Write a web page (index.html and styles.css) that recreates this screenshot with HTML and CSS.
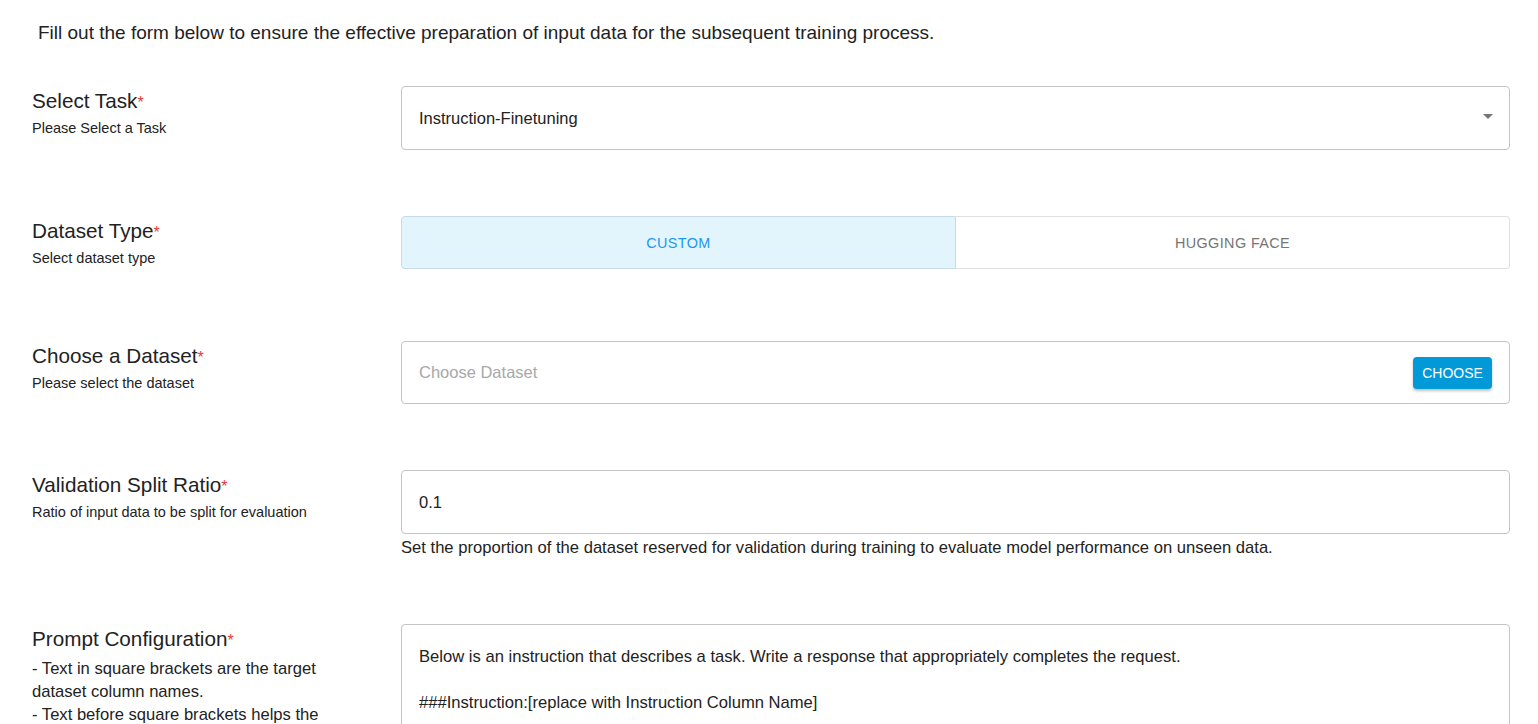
FILE: index.html
```html
<!DOCTYPE html>
<html lang="en">
<head>
    <meta charset="UTF-8">
    <meta name="viewport" content="width=device-width, initial-scale=1.0">
    <title>Data Preparation</title>
    <link rel="stylesheet" href="styles.css">
</head>
<body>
    <div class="page">
        <p class="intro">Fill out the form below to ensure the effective preparation of input data for the subsequent training process.</p>

        <form class="form" action="#">
            <div class="row">
                <div class="label-col">
                    <div class="label-title">Select Task<span class="req">*</span></div>
                    <div class="label-sub">Please Select a Task</div>
                </div>
                <div class="field-col">
                    <div class="field field-select">
                        <span class="field-value">Instruction-Finetuning</span>
                        <span class="caret"></span>
                    </div>
                </div>
            </div>

            <div class="row row-toggle">
                <div class="label-col">
                    <div class="label-title">Dataset Type<span class="req">*</span></div>
                    <div class="label-sub">Select dataset type</div>
                </div>
                <div class="field-col">
                    <div class="toggle">
                        <button type="button" class="toggle-btn active">Custom</button>
                        <button type="button" class="toggle-btn">Hugging Face</button>
                    </div>
                </div>
            </div>

            <div class="row">
                <div class="label-col">
                    <div class="label-title">Choose a Dataset<span class="req">*</span></div>
                    <div class="label-sub">Please select the dataset</div>
                </div>
                <div class="field-col">
                    <div class="field field-choose">
                        <span class="placeholder">Choose Dataset</span>
                        <button type="button" class="choose-btn">Choose</button>
                    </div>
                </div>
            </div>

            <div class="row">
                <div class="label-col">
                    <div class="label-title">Validation Split Ratio<span class="req">*</span></div>
                    <div class="label-sub">Ratio of input data to be split for evaluation</div>
                </div>
                <div class="field-col">
                    <div class="field">
                        <span class="field-value">0.1</span>
                    </div>
                    <div class="helper">Set the proportion of the dataset reserved for validation during training to evaluate model performance on unseen data.</div>
                </div>
            </div>

            <div class="row">
                <div class="label-col">
                    <div class="label-title">Prompt Configuration<span class="req">*</span></div>
                    <div class="label-desc">
                        - Text in square brackets are the target dataset column names.<br>
                        - Text before square brackets helps the model understand the structure of the prompt.
                    </div>
                </div>
                <div class="field-col">
                    <div class="field field-area">
                        <p>Below is an instruction that describes a task. Write a response that appropriately completes the request.</p>
                        <p>###Instruction:[replace with Instruction Column Name]</p>
                        <p>###Response:[replace with Response Column Name]</p>
                    </div>
                </div>
            </div>
        </form>
    </div>
</body>
</html>
```

FILE: styles.css
```css
/* page */
body {
    font-family: "Liberation Sans", Arial, sans-serif;
    background-color: #ffffff;
    color: #222222;
    margin: 0;
    padding: 0;
}

.page {
    padding: 22px 28px 0 32px;
}

.intro {
    margin: 0 0 42px 6px;
    font-size: 19px;
    line-height: 22px;
    color: #222222;
}

/* rows */
.row {
    display: flex;
    align-items: flex-start;
    margin-bottom: 66px;
}

.row-toggle {
    margin-bottom: 72px;
}

.label-col {
    width: 369px;
    flex-shrink: 0;
    padding-top: 3px;
}

.label-title {
    font-size: 20.7px;
    line-height: 24px;
    color: #222222;
}

.req {
    color: #e53935;
    font-size: 16px;
}

.label-sub {
    margin-top: 4px;
    font-size: 14.5px;
    line-height: 18px;
    color: #222222;
}

.label-desc {
    margin-top: 4px;
    width: 300px;
    font-size: 16.6px;
    line-height: 23px;
    color: #222222;
}

.field-col {
    flex: 1;
}

/* inputs */
.field {
    box-sizing: border-box;
    height: 64px;
    display: flex;
    align-items: center;
    padding: 0 17px;
    border: 1px solid #c4c4c4;
    border-radius: 4px;
    font-size: 16.5px;
    color: #222222;
}

.field-select {
    justify-content: space-between;
    padding-right: 16px;
}

.caret {
    width: 0;
    height: 0;
    border-left: 5px solid transparent;
    border-right: 5px solid transparent;
    border-top: 5px solid #757575;
    margin-top: -4px;
}

.field-choose {
    height: 63px;
    justify-content: space-between;
}

.placeholder {
    color: #a8a8a8;
}

.choose-btn {
    height: 32px;
    width: 79px;
    border: 0;
    border-radius: 4px;
    background-color: #0299d9;
    color: #ffffff;
    font-family: inherit;
    font-size: 14px;
    text-transform: uppercase;
    box-shadow: 0 2px 3px rgba(0, 0, 0, 0.25);
    cursor: pointer;
}

.helper {
    margin-top: 4px;
    font-size: 16.6px;
    line-height: 20px;
    color: #222222;
}

.field-area {
    height: auto;
    display: block;
    padding: 20px 17px;
}

.field-area p {
    margin: 0 0 23px 0;
    line-height: 23px;
    font-size: 16.6px;
}

/* toggle */
.toggle {
    display: flex;
    height: 53px;
}

.toggle-btn {
    flex: 1;
    background-color: #ffffff;
    border: 1px solid #e0e0e0;
    font-family: inherit;
    font-size: 14.4px;
    letter-spacing: 0.4px;
    text-transform: uppercase;
    color: #757575;
    cursor: pointer;
}

.toggle-btn:first-child {
    border-radius: 4px 0 0 4px;
}

.toggle-btn:last-child {
    border-left: 0;
    border-radius: 0 4px 4px 0;
}

.toggle-btn.active {
    background-color: #e3f5fc;
    border-color: #c6dbe4;
    color: #2196f3;
}
```
